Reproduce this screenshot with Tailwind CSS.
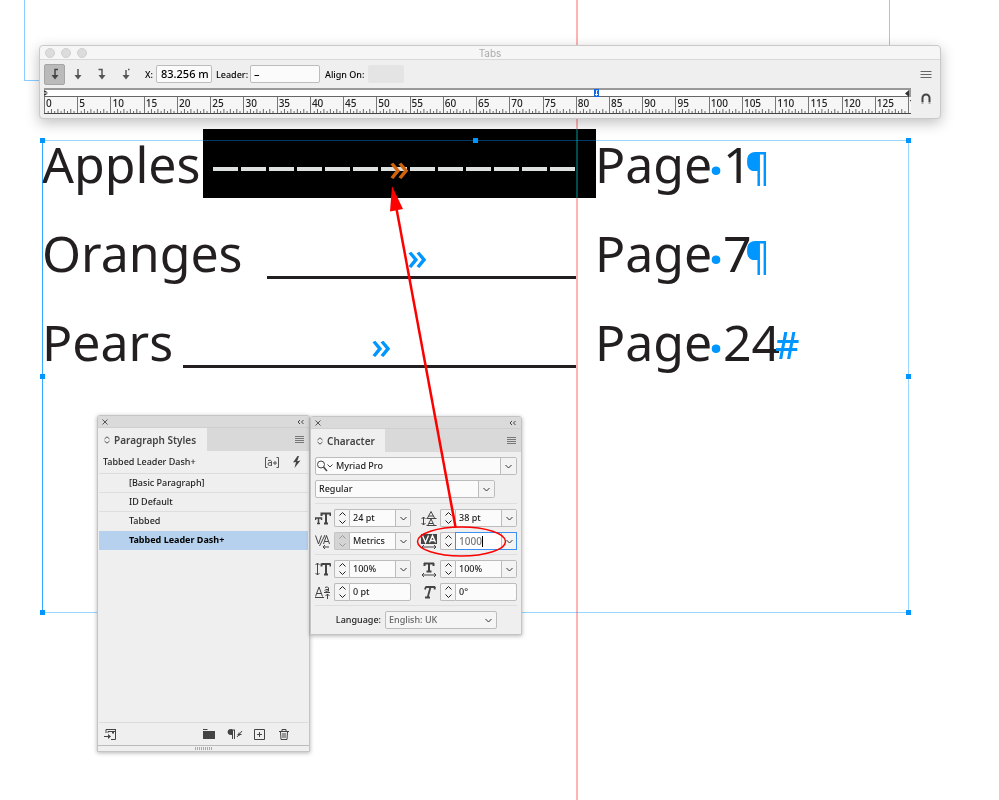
<!DOCTYPE html>
<html lang="en">

<head>
  <meta charset="UTF-8">
  <meta name="viewport" content="width=device-width, initial-scale=1.0">
  <title>Tab leaders</title>
  <script src="https://cdn.jsdelivr.net/npm/@tailwindcss/browser@4"></script>
</head>

<body class="bg-white text-[#222] font-['Noto_Sans','Open_Sans',sans-serif] text-[9px] leading-3">
  <main class="relative min-h-screen overflow-hidden">

    <!-- Page margins and column guide -->
    <div class="absolute left-[24px] top-0 w-5 h-[81px] border-l border-b border-[#8ccdff]"></div>
    <div class="absolute left-[889px] top-0 w-px h-12 bg-[#8ccdff]"></div>

    <!-- Document text -->
    <article class="absolute left-[42px] top-[129px] flex flex-col gap-5 text-[50px] leading-[71px] text-[#231f20]">
      <div class="flex h-[69px]">
        <span class="w-[171px]">Apples</span>
        <div class="relative flex items-center gap-[3px] w-[362px] mr-[20px] pt-[10px]">
          <i class="flex-1 h-1 bg-[#231f20]"></i><i class="flex-1 h-1 bg-[#231f20]"></i><i class="flex-1 h-1 bg-[#231f20]"></i><i class="flex-1 h-1 bg-[#231f20]"></i><i class="flex-1 h-1 bg-[#231f20]"></i><i class="flex-1 h-1 bg-[#231f20]"></i><i class="flex-1 h-1 bg-[#231f20]"></i><i class="flex-1 h-1 bg-[#231f20]"></i><i class="flex-1 h-1 bg-[#231f20]"></i><i class="flex-1 h-1 bg-[#231f20]"></i><i class="flex-1 h-1 bg-[#231f20]"></i><i class="flex-1 h-1 bg-[#231f20]"></i><i class="flex-1 h-1 bg-[#231f20]"></i>
          <span class="absolute left-[176px] top-0 text-[38px] font-medium leading-[75px] text-[#2e9cf5]">»</span>
        </div>
        <span class="w-[114px]">Page</span>
        <span class="w-[14px] text-center font-bold leading-[82px] text-[#0096ff]">·</span>
        <span class="w-[22px]">1</span>
        <span class="text-[38px] font-medium leading-[75px] text-[#0096ff]">¶</span>
      </div>
      <div class="flex h-[69px]">
        <span class="w-[225px]">Oranges</span>
        <div class="relative flex items-end w-[310px] mr-[18px] pb-[8px]">
          <i class="flex-1 h-[3px] bg-[#231f20]"></i>
          <span class="absolute left-[140px] top-0 text-[38px] font-medium leading-[75px] text-[#0096ff]">»</span>
        </div>
        <span class="w-[114px]">Page</span>
        <span class="w-[14px] text-center font-bold leading-[82px] text-[#0096ff]">·</span>
        <span class="w-[22px]">7</span>
        <span class="text-[38px] font-medium leading-[75px] text-[#0096ff]">¶</span>
      </div>
      <div class="flex h-[69px]">
        <span class="w-[141px]">Pears</span>
        <div class="relative flex items-end w-[394px] mr-[18px] pb-[8px]">
          <i class="flex-1 h-[3px] bg-[#231f20]"></i>
          <span class="absolute left-[188px] top-0 text-[38px] font-medium leading-[75px] text-[#0096ff]">»</span>
        </div>
        <span class="w-[114px]">Page</span>
        <span class="w-[14px] text-center font-bold leading-[82px] text-[#0096ff]">·</span>
        <span class="w-[52px]">24</span>
        <span class="text-[38px] font-medium leading-[75px] text-[#0096ff]">#</span>
      </div>
    </article>
    <div class="absolute left-[576px] inset-y-0 w-[2px] bg-[#ffb3b3]"></div>

    <!-- Selected tab, shown inverted -->
    <div class="absolute left-[203px] top-[129px] w-[393px] h-[69px] bg-white mix-blend-difference"></div>

    <!-- Text frame with handles -->
    <div class="absolute left-[42px] right-[90px] top-[140px] h-[473px] border border-[#0096ff]/40 border-l-[#0096ff]/80">
      <i class="absolute -left-[3px] -top-[3px] size-[5px] bg-[#0096ff]"></i>
      <i class="absolute left-1/2 -ml-[3px] -top-[3px] size-[5px] bg-[#0096ff]"></i>
      <i class="absolute -right-[3px] -top-[3px] size-[5px] bg-[#0096ff]"></i>
      <i class="absolute -left-[3px] top-1/2 -mt-[3px] size-[5px] bg-[#0096ff]"></i>
      <i class="absolute -right-[3px] top-1/2 -mt-[3px] size-[5px] bg-[#0096ff]"></i>
      <i class="absolute -left-[3px] -bottom-[3px] size-[5px] bg-[#0096ff]"></i>
      <i class="absolute -right-[3px] -bottom-[3px] size-[5px] bg-[#0096ff]"></i>
    </div>

    <!-- Tabs panel -->
    <section class="absolute left-[39px] right-[58px] top-[45px] rounded-[4px] border border-[#c9c9c9] bg-[#efefef] shadow-[0_4px_14px_rgba(0,0,0,0.25)]">
      <header class="relative flex items-center gap-[6px] h-[14px] pl-[5px] rounded-t-[4px] bg-[#f6f6f6] border-b border-[#d8d8d8]">
        <i class="size-[10px] rounded-full bg-[#dcdcdc] border border-[#d0d0d0]"></i>
        <i class="size-[10px] rounded-full bg-[#dcdcdc] border border-[#d0d0d0]"></i>
        <i class="size-[10px] rounded-full bg-[#dcdcdc] border border-[#d0d0d0]"></i>
        <h2 class="absolute inset-x-0 text-center font-['Inter',sans-serif] text-[10px] text-[#aaa]">Tabs</h2>
      </header>
      <div class="flex">
        <div class="flex-1 pl-1 pb-1">
          <div class="flex items-center h-[28px] text-black">
            <button aria-label="Left-justified tab" class="grid place-items-center size-[21px] rounded-[2px] bg-[#bababa] border border-[#a5a5a5]">
              <svg class="w-3 h-[14px]" viewBox="0 0 12 14" fill="none" stroke="#444"><path d="M9 2.500H6V9" stroke-width="1.500"/><path d="M2.500 8h7L6 12.500z" fill="#444" stroke="none"/></svg>
            </button>
            <button aria-label="Centre-justified tab" class="grid place-items-center w-[25px] h-[21px]">
              <svg class="w-3 h-[14px]" viewBox="0 0 12 14" fill="none" stroke="#555"><path d="M6 2V9" stroke-width="1.500"/><path d="M2.500 8h7L6 12.500z" fill="#555" stroke="none"/></svg>
            </button>
            <button aria-label="Right-justified tab" class="grid place-items-center w-6 h-[21px]">
              <svg class="w-3 h-[14px]" viewBox="0 0 12 14" fill="none" stroke="#555"><path d="M2.500 2.500H6V9" stroke-width="1.500"/><path d="M2.500 8h7L6 12.500z" fill="#555" stroke="none"/></svg>
            </button>
            <button aria-label="Decimal tab" class="grid place-items-center w-6 h-[21px]">
              <svg class="w-3 h-[14px]" viewBox="0 0 12 14" fill="none" stroke="#555"><path d="M6 3V9M8 2.500h1.500" stroke-width="1.500"/><path d="M2.500 8h7L6 12.500z" fill="#555" stroke="none"/></svg>
            </button>
            <label for="tabX" class="ml-[7px] pt-[2px] w-[11px] font-medium">X:</label>
            <input id="tabX" value="83.256 mm" class="w-[56px] h-[18px] pl-1 pr-[3px] pb-[2px] rounded-[2px] border border-[#bcbcbc] bg-[#fbfbfb] text-[11px] font-medium">
            <label for="leader" class="ml-1 pt-[2px] w-[34px] font-medium">Leader:</label>
            <input id="leader" value="–" class="w-[70px] h-[18px] pl-[3px] pb-[2px] rounded-[2px] border border-[#bcbcbc] bg-[#fbfbfb] text-[11px] font-medium">
            <label for="alignOn" class="ml-[5px] pt-[2px] w-[43px] font-medium whitespace-nowrap">Align On:</label>
            <input id="alignOn" disabled class="w-[36px] h-[18px] rounded-[2px] bg-[#e4e4e4]">
          </div>
          <!-- Tab stops -->
          <div class="relative h-[9px] bg-white border-t-2 border-b border-t-[#999] border-b-[#666]">
            <svg class="absolute left-0 top-0 w-1 h-[6px]" viewBox="0 0 4 6" fill="#333"><path d="M0 0l4 2.500H0zM0 6l4-2.500H0z"/></svg>
            <svg class="absolute left-[550px] -top-px w-[5px] h-[8px] bg-[#1166e8]" viewBox="0 0 5 8" fill="none" stroke="#fff"><path d="M3.500 1.500h-1V6M1 5l1.500 1.500L4 5"/></svg>
            <svg class="absolute right-0 top-0 w-[6px] h-[7px]" viewBox="0 0 6 7" fill="#333"><path d="M4 0v7L0 3.500z"/><path d="M4 0h2v7H4z" fill="#999"/></svg>
          </div>
          <div id="ruler" class="flex h-[17px] overflow-hidden border-b border-[#444] bg-[#f6f6f6] text-[10px] font-medium"></div>
        </div>
        <div class="flex flex-col items-center w-[29px] pt-2 gap-[13px]">
          <button aria-label="Panel menu"><svg class="block w-3 h-3" viewBox="0 0 12 12" stroke="#666"><path d="M.5 3.500h11M.5 6.500h11M.5 9.500h11"/></svg></button>
          <button aria-label="Position panel above text frame"><svg class="block w-3 h-3" viewBox="0 0 12 12" fill="none" stroke="#444" stroke-width="2"><path d="M2.500 9V5a3.500 3.500 0 0 1 7 0v4"/><path d="M2.500 9v2M9.500 9v2" stroke="#aaa"/></svg></button>
        </div>
      </div>
    </section>

    <!-- Paragraph Styles panel -->
    <section class="absolute left-[97px] top-[415px] w-[213px] border border-[#c4c4c4] rounded-t-[3px] bg-[#efefef] shadow-[0_1px_4px_rgba(0,0,0,0.3)]">
      <header class="flex items-center justify-between h-3 pl-1 pr-[5px] bg-[#dadada] border-b border-[#cfcfcf]">
        <button aria-label="Close"><svg class="block size-[6px]" viewBox="0 0 6 6" stroke="#555"><path d="M.5.5l5 5M5.500.5l-5 5"/></svg></button>
        <button aria-label="Collapse"><svg class="block w-[7px] h-[6px]" viewBox="0 0 7 6" fill="none" stroke="#444"><path d="M3 1L1 3l2 2M6.500 1l-2 2 2 2"/></svg></button>
      </header>
      <div class="flex h-[23px] bg-[#d9d9d9]">
        <h2 class="flex items-center gap-1 w-[109px] pl-[6px] bg-[#efefef] text-[10px] font-semibold text-[#444] whitespace-nowrap">
          <svg class="w-[6px] h-[8px]" viewBox="0 0 6 8" fill="none" stroke="#555"><path d="M.5 3L3 .8 5.500 3M.5 5L3 7.200 5.500 5"/></svg>
          Paragraph Styles
        </h2>
        <button aria-label="Panel menu" class="ml-auto mr-[5px]"><svg class="block w-[9px] h-2" viewBox="0 0 9 8" stroke="#777"><path d="M0 .5h9M0 2.500h9M0 4.500h9M0 6.500h9"/></svg></button>
      </div>
      <div class="flex items-center h-[22px] pl-[5px] pr-[8px]">
        <span class="flex-1 font-medium">Tabbed Leader Dash+</span>
        <button aria-label="Style override highlighter" class="mr-3"><svg class="block w-4 h-[11px]" viewBox="0 0 16 11" fill="none" stroke="#555"><path d="M3.500.5h-2v10h2M12.500.5h2v10h-2M4 3.500q3.500-1 3.500 1V9M7.500 5.500H6Q4 5.500 4 7t1.500 1.500 2-1M9 6h4M11 4v4"/></svg></button>
        <button aria-label="Clear overrides"><svg class="block w-[9px] h-3" viewBox="0 0 9 12" fill="#444"><path d="M5.500 0L1 6.500l3-.5L2.500 12 8.500 4.500l-3.300.8L7 0z"/></svg></button>
      </div>
      <ul class="h-[250px] mx-px border-y border-[#dcdcdc] font-medium">
        <li class="h-[19px] pl-[30px] leading-[18px] border-b border-[#dedede]">[Basic Paragraph]</li>
        <li class="h-[19px] pl-[30px] leading-[18px] border-b border-[#dedede]">ID Default</li>
        <li class="h-[19px] pl-[30px] leading-[18px]">Tabbed</li>
        <li class="h-[19px] pl-[30px] leading-[18px] bg-[#b5d1ee] font-bold text-black">Tabbed Leader Dash+</li>
      </ul>
      <footer class="flex items-center h-[22px] px-[6px]">
        <button aria-label="Add to CC Library" class="mr-auto"><svg class="block w-3 h-3" viewBox="0 0 12 12" fill="none" stroke="#444"><path d="M2 5V1.500h9.500M4 5V3.500h7.500v8H7M11.500 1v3"/><path d="M0 8.500h5"/><path d="M4 6l3 2.500L4 11z" fill="#444" stroke="none"/><path d="M8 3h2v3L9 5 8 6z" fill="#444" stroke="none"/></svg></button>
        <button aria-label="Create group" class="mr-3"><svg class="block w-3 h-[10px]" viewBox="0 0 12 10" fill="#444"><path d="M0 0h4l1 1H0zM0 2h12v8H0z"/></svg></button>
        <button aria-label="Clear overrides in selection" class="mr-[11px]"><svg class="block w-4 h-[10px]" viewBox="0 0 16 10" fill="none" stroke="#444"><path d="M4 1h4M5.500 1v9M7.500 1v9"/><path d="M5 .5H3.500a2.500 2.500 0 0 0 0 5H5z" fill="#444"/><path d="M10 8l5-6M12 3.500v3.500M10.500 5.500h4"/></svg></button>
        <button aria-label="Create new style" class="mr-[14px]"><svg class="block size-[11px]" viewBox="0 0 11 11" fill="none" stroke="#444"><path d="M.5.5h10v10H.5zM5.500 3v5M3 5.500h5"/></svg></button>
        <button aria-label="Delete style" class="mr-[14px]"><svg class="block w-[10px] h-[11px]" viewBox="0 0 10 11" fill="none" stroke="#444"><path d="M0 2.500h10M3 2V.5h4V2M1.500 3l.5 7.500h6L8.500 3M4 4v5M6 4v5"/></svg></button>
      </footer>
      <div class="flex items-center justify-center h-[6px] border-t border-[#bbb]">
        <svg class="w-[18px] h-[3px]" viewBox="0 0 18 3" stroke="#aaa" stroke-dasharray="1 1" stroke-width="3"><path d="M0 1.500h18"/></svg>
      </div>
    </section>

    <!-- Character panel -->
    <section class="absolute left-[310px] top-[416px] w-[212px] border border-[#c4c4c4] rounded-t-[3px] bg-[#efefef] font-medium shadow-[0_1px_4px_rgba(0,0,0,0.3)]">
      <header class="flex items-center justify-between h-3 pl-1 pr-[5px] bg-[#dadada] border-b border-[#cfcfcf]">
        <button aria-label="Close"><svg class="block size-[6px]" viewBox="0 0 6 6" stroke="#555"><path d="M.5.5l5 5M5.500.5l-5 5"/></svg></button>
        <button aria-label="Collapse"><svg class="block w-[7px] h-[6px]" viewBox="0 0 7 6" fill="none" stroke="#444"><path d="M3 1L1 3l2 2M6.500 1l-2 2 2 2"/></svg></button>
      </header>
      <div class="flex h-[23px] bg-[#d9d9d9]">
        <h2 class="flex items-center gap-1 w-[74px] pl-[6px] bg-[#efefef] text-[10px] font-semibold text-[#444]">
          <svg class="w-[6px] h-[8px]" viewBox="0 0 6 8" fill="none" stroke="#555"><path d="M.5 3L3 .8 5.500 3M.5 5L3 7.200 5.500 5"/></svg>
          Character
        </h2>
        <button aria-label="Panel menu" class="ml-auto mr-[5px]"><svg class="block w-[9px] h-2" viewBox="0 0 9 8" stroke="#777"><path d="M0 .5h9M0 2.500h9M0 4.500h9M0 6.500h9"/></svg></button>
      </div>

      <div class="px-1 pt-[5px] pb-[5px]">
        <div class="flex h-[18px] rounded-[2px] border border-[#bcbcbc] bg-[#fbfbfb]">
          <svg class="w-[18px] h-4" viewBox="0 0 18 16" fill="none" stroke="#444"><circle cx="5" cy="6.500" r="3.500"/><path d="M7.500 9l3.500 4" stroke-width="1.500"/><path d="M11.500 6.500L14 9l2.500-2.500"/></svg>
          <input aria-label="Font family" value="Myriad Pro" class="flex-1 min-w-0 pl-[2px]">
          <button aria-label="Font list" class="grid place-items-center w-4 bg-[#f3f3f3] border-l border-[#bcbcbc]"><svg class="w-[7px] h-[5px]" viewBox="0 0 7 5" fill="none" stroke="#333"><path d="M.5 1l3 3 3-3"/></svg></button>
        </div>
        <div class="flex w-[180px] h-[18px] mt-[5px] rounded-[2px] border border-[#bcbcbc] bg-[#fbfbfb]">
          <select aria-label="Font style" class="flex-1 appearance-none pl-[3px]"><option>Regular</option></select>
          <span class="grid place-items-center w-4 bg-[#f3f3f3] border-l border-[#bcbcbc]"><svg class="w-[7px] h-[5px]" viewBox="0 0 7 5" fill="none" stroke="#333"><path d="M.5 1l3 3 3-3"/></svg></span>
        </div>

        <div id="metrics" class="grid grid-cols-2 gap-x-[10px] gap-y-[5px] mt-[5px] pt-[5px] border-t border-[#dedede]"></div>
        <div id="scales" class="grid grid-cols-2 gap-x-[10px] gap-y-[5px] mt-1 pt-[5px] border-t border-[#dedede]"></div>

        <div class="flex items-center mt-1 pt-[5px] border-t border-[#dedede]">
          <label for="language" class="w-[70px] pr-1 text-right">Language:</label>
          <div class="flex items-center w-[112px] h-[18px] rounded-[2px] border border-[#bcbcbc] bg-[#f5f5f5]">
            <select id="language" class="flex-1 appearance-none pl-[3px] text-[#666]"><option>English: UK</option></select>
            <svg class="w-[7px] h-[5px] mr-1" viewBox="0 0 7 5" fill="none" stroke="#333"><path d="M.5 1l3 3 3-3"/></svg>
          </div>
        </div>
      </div>
    </section>

    <!-- Annotation -->
    <svg class="absolute left-[380px] top-[180px] w-[140px] h-[380px] pointer-events-none" viewBox="380 180 140 380" fill="none" stroke="#fe0000">
      <path d="M396 206L455.500 527" stroke-width="2.500"/>
      <path d="M392 186L390 211.500 403 209z" fill="#fe0000" stroke="none"/>
      <ellipse cx="461.500" cy="541.500" rx="44" ry="14.500" stroke-width="1.500"/>
    </svg>
  </main>

  <script>
    // ruler: 26 whole divisions and a clipped stub at the end
    const ruler = document.getElementById('ruler');
    let cells = '';
    for (let i = 0; i < 26; i++) {
      cells += `<div class="relative flex-1 border-l border-[#777] pl-px"><span class="block leading-3">${i * 5}</span>
        <svg class="absolute left-0 bottom-0 w-full h-[4px]" viewBox="0 0 100 4" preserveAspectRatio="none" stroke="#666" stroke-width="3">
          <path d="M10 2v2M20 0v4M30 2v2M40 0v4M50 2v2M60 0v4M70 2v2M80 0v4M90 2v2"/></svg></div>`;
    }
    ruler.innerHTML = cells + '<div class="w-[3px] overflow-hidden border-l border-[#777] leading-3">130</div>';

    const icons = {
      size: '<path d="M6.500 2.500h9M11 2.500V13M6.500 1.500v3.500M15.500 1.500v3.500M9 12.500h4" stroke-width="2"/><path d="M0 7h7M3.500 7v6M2 12.500h3M.5 6.500v2.500M6.500 6.500v2.500" stroke-width="1.500"/>',
      leading: '<path d="M2.500 6v8M.5 8l2-2 2 2M.5 12l2 2 2-2M6.500 7L10 .5 13.500 7M7.500 5h5M7 14l3-6 3 6M8 12.500h4M5.500 7.500h10M5.500 14.500h10"/>',
      kerning: '<path d="M.5 1.500l3 8.500 3-8.500M4.500 12L10 1M8.500 10l3-8.500 3 8.500M9.500 7.500h4M8 13h6M10 11l-2 2 2 2"/>',
      tracking: '<path d="M0 0h16v10H0z" fill="#444" stroke="none"/><path d="M1.500 1.500l3 7 3-7M8.500 8.500l3-7 3 7M9.500 6.500h4" stroke="#fff" stroke-width="1.300"/><path d="M1 13h14M3 11l-2 2 2 2M13 11l2 2-2 2"/>',
      vscale: '<path d="M2.500 1v12M.5 3l2-2 2 2M.5 11l2 2 2-2"/><path d="M6.500 2h9M11 2v11M6.500 1.500v3M15.500 1.500v3M9 12.500h4" stroke-width="2"/>',
      hscale: '<path d="M3 1.500h10M8 1.500V10M3.500 1v3M12.500 1v3M5.500 9.500h5" stroke-width="2"/><path d="M1 13h14M3 11l-2 2 2 2M13 11l2 2-2 2"/>',
      baseline: '<path d="M.5 11.500L4 2l3.500 9.500M1.500 8.500h5M0 12.500h9M10 2.500q3-1.500 3.500.5v3.500M13 4.500q-3-.5-3 1t3 .5M9 7.500h6M12.500 14V9M10.500 11l2-2 2 2"/>',
      skew: '<path d="M5 2h9M9.500 2L6.500 13M5 1.500L4 4.500M14 1.500l-.5 3M4 12.500h5" stroke-width="1.800"/>'
    };

    function field(icon, name, value, opt = {}) {
      const chevron = opt.plain ? '' : `<button aria-label="${name} presets" class="grid place-items-center w-[15px] bg-[#f3f3f3] border-l border-[#bcbcbc]"><svg class="w-[7px] h-[5px]" viewBox="0 0 7 5" fill="none" stroke="#333"><path d="M.5 1l3 3 3-3"/></svg></button>`;
      const box = opt.active ? 'flex flex-1 min-w-0 border border-[#3d8ff0] bg-white text-[#777]' : 'flex flex-1 min-w-0 rounded-r-[2px] border border-[#bcbcbc] bg-[#fbfbfb]';
      const input = opt.active ? 'flex-1 min-w-0 pl-[3px] text-[10px]' : 'flex-1 min-w-0 pl-[3px]';
      const caret = opt.active ? '<i class="absolute left-[61px] top-1 w-px h-[11px] bg-black"></i>' : '';
      const step = opt.off ? 'grid place-items-center w-[15px] rounded-l-[2px] border border-r-0 border-[#c4c4c4] bg-[#d4d4d4]' : 'grid place-items-center w-[15px] rounded-l-[2px] border border-r-0 border-[#bcbcbc] bg-[#f5f5f5]';
      return `<div class="relative flex h-[18px]">
        <svg class="w-4 h-[15px] mt-[2px] mr-[3px]" viewBox="0 0 16 15" fill="none" stroke="#444">${icons[icon]}</svg>
        <button aria-label="Step ${name}" class="${step}"><svg class="w-[7px] h-3" viewBox="0 0 7 12" fill="none" stroke="${opt.off ? '#999' : '#222'}"><path d="M.5 3.500l3-3 3 3M.5 8.500l3 3 3-3"/></svg></button>
        <div class="${box}"><input aria-label="${name}" value="${value}" class="${input}">${chevron}</div>${caret}
      </div>`;
    }

    document.getElementById('metrics').innerHTML =
      field('size', 'Font size', '24 pt') + field('leading', 'Leading', '38 pt') +
      field('kerning', 'Kerning', 'Metrics', { off: true }) + field('tracking', 'Tracking', '1000', { active: true });
    document.getElementById('scales').innerHTML =
      field('vscale', 'Vertical scale', '100%') + field('hscale', 'Horizontal scale', '100%') +
      field('baseline', 'Baseline shift', '0 pt', { plain: true }) + field('skew', 'Skew', '0°', { plain: true });
  </script>
</body>

</html>
